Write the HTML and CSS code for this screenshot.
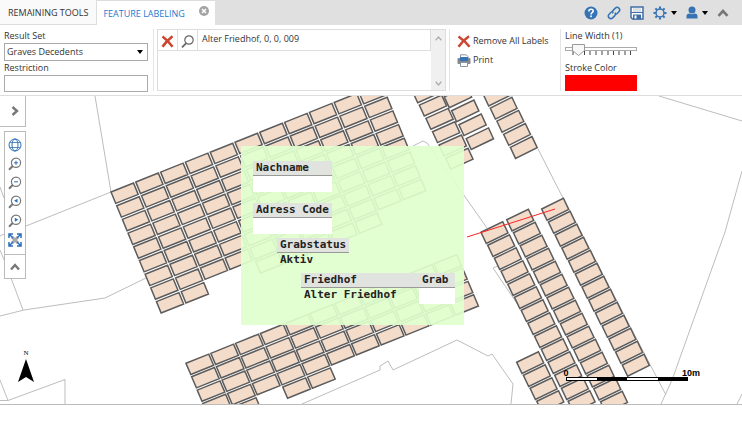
FILE: index.html
```html
<!DOCTYPE html>
<html lang="en">
<head>
<meta charset="utf-8">
<title>Feature Labeling</title>
<link rel="stylesheet" href="styles.css">
</head>
<body>
<header class="topbar">
  <nav class="tabs">
    <a class="tab" href="#remaining">REMAINING TOOLS</a>
    <div class="tab tab-active">
      <a href="#labeling">FEATURE LABELING</a>
      <button class="close" aria-label="Close tab">
        <svg width="10" height="10" viewBox="0 0 10 10"><circle cx="5" cy="5" r="5" fill="#a3a3a3"/><path d="M3 3l4 4M7 3l-4 4" stroke="#fff" stroke-width="1.5"/></svg>
      </button>
    </div>
  </nav>
  <div class="tools">
    <button aria-label="Help"><svg width="14" height="14" viewBox="0 0 14 14"><circle cx="7" cy="7" r="6.5" fill="#3573b5"/><path d="M4.9 5.4c0-3 4.300-2.800 4.300-.3C9.200 6.700 7 6.700 7 8.400" fill="none" stroke="#fff" stroke-width="1.600"/><rect x="6.200" y="9.500" width="1.700" height="1.700" fill="#fff"/></svg></button>
    <button aria-label="Link"><svg width="14" height="14" viewBox="0 0 14 14"><g fill="none" stroke="#3573b5" stroke-width="1.500" transform="rotate(-45 7 7)"><path d="M6.500 4.500H2.600a2.500 2.500 0 0 0 0 5h2.800a2.500 2.500 0 0 0 2.400-2"/><path d="M7.500 9.500h3.900a2.500 2.500 0 0 0 0-5H8.600a2.500 2.500 0 0 0-2.400 2"/></g></svg></button>
    <button aria-label="Save"><svg width="14" height="14" viewBox="0 0 14 14"><path d="M1 1h12v12H2.500L1 11.500z" fill="#fff" stroke="#3f6fa5" stroke-width="1.500"/><path d="M1 6.500h12" stroke="#3f6fa5"/><path d="M3 3h8M3 5h8" stroke="#b9c3cd"/><rect x="3" y="8.500" width="8" height="5" fill="#3f6fa5"/><rect x="4.500" y="9.500" width="2" height="3" fill="#fff"/></svg></button>
    <button aria-label="Settings"><svg width="14" height="14" viewBox="0 0 14 14"><g fill="none" stroke="#3573b5"><circle cx="7" cy="7" r="4" stroke-width="1.500"/><path d="M7 .5v2.300M7 11.200v2.300M.5 7h2.300M11.200 7h2.300M2.400 2.400L4 4M10 10l1.600 1.600M11.600 2.400L10 4M4 10l-1.600 1.600" stroke-width="2"/></g></svg><svg width="6" height="4" viewBox="0 0 6 4"><path d="M0 0h6L3 4z" fill="#000"/></svg></button>
    <button aria-label="User"><svg width="12" height="14" viewBox="0 0 12 14"><circle cx="6" cy="4" r="3.500" fill="#3573b5"/><path d="M.5 12.500V10q0-2.500 3-2.500Q6 9 8.500 7.500q3 0 3 2.500v2.500z" fill="#3573b5"/></svg><svg width="6" height="4" viewBox="0 0 6 4"><path d="M0 0h6L3 4z" fill="#000"/></svg></button>
    <button aria-label="Collapse ribbon"><svg width="12" height="8" viewBox="0 0 12 8"><path d="M1.500 6.800L6 2l4.500 4.800" fill="none" stroke="#777" stroke-width="2.600"/></svg></button>
  </div>
</header>

<section class="ribbon">
  <div class="group fields">
    <label for="result">Result Set</label>
    <div class="select-box"><select id="result"><option>Graves Decedents</option></select></div>
    <label for="restriction">Restriction</label>
    <input id="restriction" type="text">
  </div>
  <div class="group results">
    <div class="list">
      <div class="row">
        <button class="cell" aria-label="Remove"><svg width="13" height="13" viewBox="0 0 13 13"><path d="M1.500 1.500C5 4 8 7 11.500 11.800M11.500 1.200C8 4 4 8 1.500 11.800" fill="none" stroke="#cc4630" stroke-width="2.600"/></svg></button>
        <button class="cell" aria-label="Zoom to"><svg width="13" height="13" viewBox="0 0 13 13"><circle cx="8" cy="5" r="4.200" fill="none" stroke="#666" stroke-width="1.200"/><path d="M5 8.300L1 12.300" stroke="#666" stroke-width="1.800"/></svg></button>
        <span class="name">Alter Friedhof, 0, 0, 009</span>
      </div>
    </div>
    <div class="scroll">
      <svg width="7" height="5" viewBox="0 0 7 5"><path d="M.7 4.200L3.500 1l2.800 3.200" fill="none" stroke="#adadad" stroke-width="1.300"/></svg>
      <svg width="7" height="5" viewBox="0 0 7 5"><path d="M.7.8L3.500 4 6.300.8" fill="none" stroke="#adadad" stroke-width="1.300"/></svg>
    </div>
  </div>
  <div class="group actions">
    <button><svg width="14" height="13" viewBox="0 0 14 13"><path d="M1.500 1.500C5 4 9 7 12.500 11.800M12 1.200C8 4 4 8 1.500 11.800" fill="none" stroke="#cc4630" stroke-width="2.500"/></svg>Remove All Labels</button>
    <button><svg width="14" height="13" viewBox="0 0 14 13"><path d="M3.500 4V.8h5.800L11 2.500V4" fill="#fff" stroke="#8a96a3"/><rect x=".5" y="4" width="13" height="6" rx="1" fill="#83888d"/><path d="M3 3h8v4H3z" fill="#3573b5"/><path d="M3.500 8.500h7v4h-7z" fill="#fff" stroke="#8a96a3"/></svg>Print</button>
  </div>
  <div class="group stroke">
    <label for="width">Line Width (1)</label>
    <div class="slider">
      <input id="width" type="range" min="0" max="9" value="1">
      <svg class="ticks" width="72" height="4" viewBox="0 0 72 4"><path d="M8 0v4M13.800 0v4M19.500 0v4M25 0v4M31 0v4M37 0v4M43 0v4M48.500 0v4M54 0v4M60 0v4M65.500 0v4" stroke="#444"/></svg>
    </div>
    <label for="color">Stroke Color</label>
    <button id="color" class="swatch" aria-label="Stroke color red"></button>
  </div>
</section>

<main class="map">
  <svg class="canvas" viewBox="0 96 742 308" preserveAspectRatio="xMinYMin slice">
    <g class="parcels">
      <path d="M95 96L111 192L26 226M0 187L4 198M0 236L4 234M0 250L5 262M11 278L23 310M0 316L24 310L105 298L146 278"/>
      <path d="M0 380L8 400.500L65 379.500V404M0 400.500H8"/>
      <path d="M413 146L423 141L427 143L487 228M538 149L563 198L666 395M498 266L493 268L518 305"/>
      <path d="M659 96L742 121M742 171L725 232L672 380L661 404M742 394L737 404"/>
      <path d="M302 404L380 370V366L388 361L393 370L457 340L488 356L492 354L513 384L511 404"/>
    </g>
    <g id="graves" class="graves"></g>
    <rect x="241" y="146" width="223" height="179" fill="#e0ffce" fill-opacity=".92"/>
    <path d="M467 237L555 209" stroke="#f22" stroke-width="1"/>
    <g class="north"><text x="26" y="355" text-anchor="middle">N</text><path d="M26 359L34 382L26 377L18 382z"/></g>
    <g class="scale">
      <text x="566" y="376" text-anchor="middle">0</text>
      <text x="691" y="376" text-anchor="middle">10m</text>
      <rect x="566.500" y="377.500" width="121" height="3"/>
      <path d="M597 379h30M658 379h30"/>
    </g>
  </svg>
  <div class="label-card">
    <dl class="entry"><dt>Nachname</dt><dd class="blank"></dd></dl>
    <dl class="entry code"><dt>Adress Code</dt><dd class="blank"></dd></dl>
    <dl class="entry status"><dt>Grabstatus</dt><dd>Aktiv</dd></dl>
    <div class="place">
      <dl class="entry"><dt>Friedhof</dt><dd>Alter Friedhof</dd></dl>
      <dl class="entry grab"><dt>Grab</dt><dd class="blank"></dd></dl>
    </div>
  </div>
  <div class="side">
    <button class="expand" aria-label="Expand panel"><svg width="8" height="10" viewBox="0 0 8 10"><path d="M1.500 1L6 5 1.500 9" fill="none" stroke="#777" stroke-width="2.400"/></svg></button>
    <div class="zoomer">
      <button aria-label="Full extent"><svg width="14" height="14" viewBox="0 0 14 14"><g fill="none" stroke="#3573b5"><circle cx="7" cy="7" r="6"/><ellipse cx="7" cy="7" rx="3" ry="6"/><path d="M1.500 4.500h11M1.500 9.500h11" stroke-width=".8"/></g></svg></button>
      <button aria-label="Zoom in"><svg width="14" height="14" viewBox="0 0 14 14"><circle cx="8" cy="5.800" r="4.600" class="lens"/><path d="M4.700 9L1 12.700" class="grip"/><path d="M6 5.800h4M8 3.800v4" stroke="#2a6fc0"/></svg></button>
      <button aria-label="Zoom out"><svg width="14" height="14" viewBox="0 0 14 14"><circle cx="8" cy="5.800" r="4.600" class="lens"/><path d="M4.700 9L1 12.700" class="grip"/><path d="M6 5.800h4" stroke="#2a6fc0"/></svg></button>
      <button aria-label="Previous view"><svg width="14" height="14" viewBox="0 0 14 14"><circle cx="8" cy="5.800" r="4.600" class="lens"/><path d="M4.700 9L1 12.700" class="grip"/><path d="M9.500 3.800v4L6 5.800z" fill="#2a6fc0"/></svg></button>
      <button aria-label="Next view"><svg width="14" height="14" viewBox="0 0 14 14"><circle cx="8" cy="5.800" r="4.600" class="lens"/><path d="M4.700 9L1 12.700" class="grip"/><path d="M6.800 3.800v4l3.500-2z" fill="#2a6fc0"/></svg></button>
      <button aria-label="Zoom to selection"><svg width="14" height="14" viewBox="0 0 14 14"><path d="M4 4l6 6M10 4l-6 6" stroke="#aaa" stroke-width="3"/><path d="M1 5V1h4M9 1h4v4M13 9v4H9M5 13H1V9M1 1l4 4M13 1L9 5M13 13L9 9M1 13l4-4" fill="none" stroke="#2a6fc0" stroke-width="1.500"/></svg></button>
      <button class="fold" aria-label="Collapse tools"><svg width="10" height="8" viewBox="0 0 10 8"><path d="M1 6.500L5 2l4 4.500" fill="none" stroke="#777" stroke-width="2.400"/></svg></button>
    </div>
  </div>
</main>
<script src="graves.js"></script>
</body>
</html>
```
FILE: styles.css
```css
* { box-sizing: border-box; }
body {
  margin: 0;
  min-height: 100vh;
  display: flex;
  flex-direction: column;
  padding-bottom: 21px;
  background: #fff;
  color: #333;
  font: 9px/14px "Open Sans", "Noto Sans", sans-serif;
}
button, input, select { font: inherit; color: inherit; }
button { border: 0; padding: 0; background: none; display: flex; align-items: center; justify-content: center; }
a { color: inherit; text-decoration: none; }
svg { display: block; flex: none; }
dl, dd { margin: 0; }

.topbar { display: flex; justify-content: space-between; height: 25px; background: #e0e0e0; }
.tabs { display: flex; background: #fafafa; }
.tab { display: flex; align-items: center; padding: 2px 8px 0 8px; border-bottom: 1px solid #ddd; }
.tab-active { gap: 14px; padding: 2px 6px 0; border: 1px solid #ddd; border-width: 1px 0 0 1px; background: #fff; color: #1b7bd0; }
.close { align-self: flex-start; margin-top: 3px; }
.tools { display: flex; align-items: center; gap: 9px; padding-right: 13px; }
.tools button { gap: 4px; }

.ribbon { display: flex; padding: 4px; height: 71px; border-bottom: 1px solid #ddd; }
.group + .group { border-left: 1px solid #e4e4e4; }
.fields { display: flex; flex-direction: column; width: 149px; padding-right: 5px; }
.fields input { height: 17px; width: 144px; border: 1px solid #aaa; background: #fff; }
.select-box { position: relative; }
.select-box::after { content: ""; position: absolute; right: 5px; top: 7px; border: 3px solid transparent; border-top: 4px solid #000; border-bottom: 0; }
.select-box select { display: block; appearance: none; width: 100%; height: 18px; padding: 0 2px; border: 1px solid #aaa; border-radius: 0; background: #fff; }
.results { display: flex; flex: 0 0 296px; padding: 0 3px; }
.list { flex: 1; border: 1px solid #ddd; border-right: 0; }
.row { display: flex; height: 21px; border-bottom: 1px solid #ddd; border-right: 1px solid #ddd; }
.cell { width: 20px; padding-top: 3px; border-right: 1px solid #ddd; }
.name { padding: 2px 4px; }
.scroll { width: 15px; padding: 6px 4px 4px; display: flex; flex-direction: column; justify-content: space-between; border: 1px solid #ddd; border-left: 0; background: #f0f0f0; }
.actions { flex: 0 0 111px; padding: 5px 7px; display: flex; flex-direction: column; align-items: flex-start; gap: 5px; }
.actions button { gap: 2px; white-space: nowrap; }
.stroke { display: flex; flex-direction: column; padding-left: 4px; }
.slider { position: relative; width: 72px; height: 18px; }
.slider input { position: relative; z-index: 1; display: block; appearance: none; width: 100%; height: 12px; margin: 0; background: none; }
.slider input::-webkit-slider-runnable-track { height: 4px; border: 1px solid #aaa; background: #fff; }
.slider input::-webkit-slider-thumb {
  appearance: none;
  width: 13px;
  height: 12px;
  margin-top: -4px;
  background: url("data:image/svg+xml,%3Csvg xmlns='http://www.w3.org/2000/svg' viewBox='0 0 13 12'%3E%3Cpath d='M.5.5h12v6l-6 5-6-5z' fill='%23f8f8f8' stroke='%23999'/%3E%3C/svg%3E");
}
.ticks { position: absolute; left: 0; top: 8px; }
.swatch { width: 72px; height: 16px; background: #f00; }

.map { position: relative; flex: 1; min-height: 308px; border-bottom: 1px solid #bbb; }
.canvas { position: absolute; left: 0; top: 0; width: 100%; height: 100%; }
.parcels { fill: none; stroke: #bdbdbd; stroke-width: 1; }
.graves { fill: #f4dccb; stroke: #5c5c5c; stroke-width: 1.500; }
.north { font: 7px "Liberation Serif", serif; }
.scale { font: bold 9px "Liberation Sans", sans-serif; }
.scale rect { fill: #fff; stroke: #000; }
.scale path { stroke: #000; stroke-width: 4; }

.label-card {
  position: absolute;
  left: 241px;
  top: 50px;
  width: 223px;
  height: 179px;
  padding: 15px 9px 0 12px;
  color: #222;
  font: bold 11px/14px "DejaVu Sans Mono", monospace;
}
.entry { width: max-content; }
.entry dt { min-width: 79px; padding: 0 3px; border-bottom: 1px solid #999; background: #e1e3df; }
.entry dd { padding: 0 3px; }
.entry .blank { height: 16px; background: #fff; padding: 0; }
.code { margin-top: 11px; }
.status { margin: 4px 0 0 24px; }
.status dt { min-width: 0; }
.place { display: flex; margin: 6px 0 0 48px; }
.place .entry:first-child { flex: 1; }
.grab { width: 36px; }
.grab dt { min-width: 0; }

.side { position: relative; width: 26px; }
.expand { width: 26px; height: 31px; border: 1px solid #bbb; border-width: 0 1px 1px 0; background: #fff; padding-left: 5px; }
.zoomer { display: flex; flex-direction: column; align-items: stretch; margin: 4px 0 0 4px; width: 22px; padding-top: 3px; border: 1px solid #bbb; background: #fff; }
.zoomer button { height: 19px; }
.zoomer .fold { height: 24px; margin-top: 5px; border-top: 1px solid #bbb; }
.lens { fill: #fff; stroke: #777; stroke-width: 1.200; }
.grip { stroke: #777; stroke-width: 2; }
```
FILE: graves.js
```js
// Each section is a skewed grid: origin, column step, row step,
// plot size vectors, and the columns occupied in every row.
const sections = [
  { at: [111, 192], col: [24.8, -9.95], row: [5.68, 13.7], w: [22.5, -9], h: [4.7, 11.4],
    rows: [[0, 10], [0, 10], [0, 10], [0, 10], [0, 10], [0, 10], [0, 10], [0, 10], [0, 1, 4, 8]] },
  { at: [186, 363.3], col: [24.8, -9.95], row: [5.6, 13.4], w: [22.8, -9.2], h: [4.8, 11.2],
    rows: [[0, 10], [0, 10], [0, 10], [0, 10], [0, 1, 3, 4]] },
  { at: [412.7, 91.8], row: [6.6, 13.3], w: [22.3, -10], h: [5, 10.9], count: 6 },
  { at: [437, 83], row: [7.3, 13.9], w: [22.3, -10.7], h: [5, 10.9], count: 5 },
  { at: [483.5, 95], row: [6.7, 13.1], w: [21.7, -10.8], h: [5.2, 11], count: 5 },
  { at: [541.7, 209], row: [6.72, 13], w: [21.7, -10.7], h: [5.3, 11.2], count: 13 },
  { at: [506.7, 219.7], row: [6.7, 13], w: [21.7, -10.5], h: [5.3, 11.2], count: 15 },
  { at: [481, 232.3], row: [6.7, 13], w: [21.7, -10.5], h: [5.3, 11.2], count: 14 },
  { at: [516.7, 362.3], row: [6.7, 13], w: [21.7, -10.5], h: [5.3, 11.2], count: 4 }
];

let d = "";
for (const s of sections) {
  const rows = s.rows || Array.from({ length: s.count }, () => [0, 0]);
  const col = s.col || [0, 0];
  rows.forEach((ranges, r) => {
    for (let i = 0; i < ranges.length; i += 2) {
      for (let c = ranges[i]; c <= ranges[i + 1]; c++) {
        const x = s.at[0] + c * col[0] + r * s.row[0];
        const y = s.at[1] + c * col[1] + r * s.row[1];
        d += `M${x} ${y}l${s.w}l${s.h}l${-s.w[0]} ${-s.w[1]}z`;
      }
    }
  });
}
const path = document.createElementNS("http://www.w3.org/2000/svg", "path");
path.setAttribute("d", d);
document.getElementById("graves").append(path);
```
